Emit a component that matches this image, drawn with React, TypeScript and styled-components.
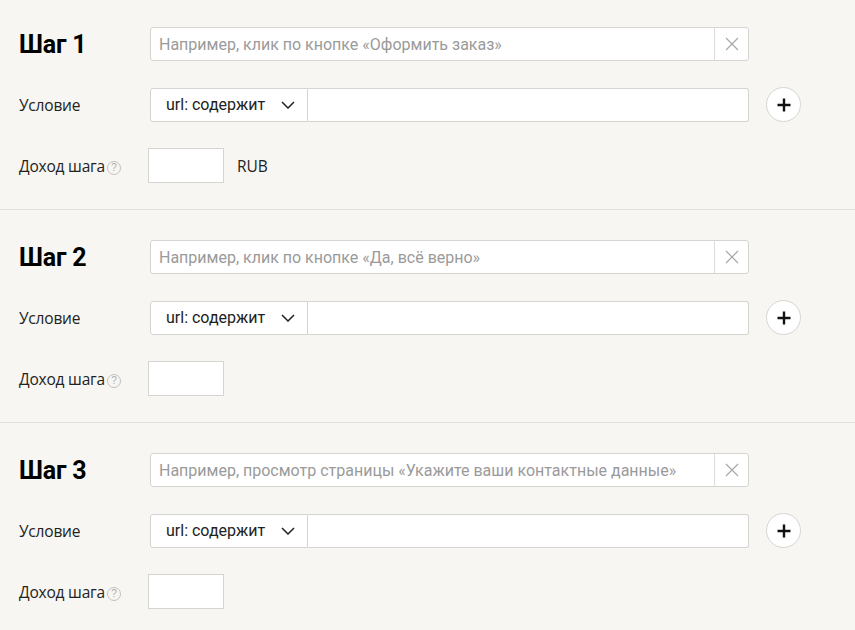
import React from "react";
import styled, { createGlobalStyle } from "styled-components";

const Global = createGlobalStyle`
  html, body { margin: 0; padding: 0; background: #f7f6f2; }
  body { font-family: "Open Sans", "Noto Sans", Arial, sans-serif; color: #222; }
`;

const Page = styled.div`
  width: 855px;
  background: #f7f6f2;
`;

const Section = styled.section<{ $first?: boolean }>`
  padding: ${(p) => (p.$first ? "27px" : "30px")} 0 26px 19px;
  border-bottom: 1px solid #e2e0dc;
  display: flex;
  flex-direction: column;
`;

const Row = styled.div<{ $gap?: number; $labelWidth?: number }>`
  display: grid;
  grid-template-columns: ${(p) => p.$labelWidth ?? 131}px auto;
  align-items: center;
  margin-top: ${(p) => p.$gap ?? 0}px;
`;

const Title = styled.div`
  font-family: Roboto, "Noto Sans", sans-serif;
  font-weight: 700;
  font-size: 25px;
  line-height: 30px;
  letter-spacing: -0.2px;
  color: #000;
  padding-top: 2px;
`;

const Label = styled.div`
  font-family: "Open Sans", "Noto Sans", sans-serif;
  font-size: 15.5px;
  letter-spacing: -0.2px;
  color: #222;
  display: flex;
  align-items: center;
  gap: 2px;
`;

const Field = styled.div`
  display: flex;
  align-items: center;
`;

const NameBox = styled.div`
  width: 599px;
  height: 34px;
  box-sizing: border-box;
  border: 1px solid #d6d4d0;
  border-radius: 3px;
  background: #fff;
  display: flex;
`;

const Placeholder = styled.div`
  flex: 1;
  padding-left: 8px;
  display: flex;
  align-items: center;
  font-family: Roboto, "Noto Sans", sans-serif;
  font-size: 16px;
  color: #9a9a9a;
  white-space: nowrap;
  overflow: hidden;
`;

const ClearBtn = styled.div`
  width: 33px;
  border-left: 1px solid #dedcd8;
  display: flex;
  align-items: center;
  justify-content: center;
`;

const Select = styled.div`
  width: 158px;
  height: 34px;
  box-sizing: border-box;
  border: 1px solid #d6d4d0;
  border-radius: 3px 0 0 3px;
  background: #fff;
  display: flex;
  align-items: center;
  justify-content: space-between;
  padding: 0 12px 0 15px;
  font-family: Roboto, "Noto Sans", sans-serif;
  font-size: 16px;
  color: #222;
`;

const ValueInput = styled.div`
  width: 441px;
  height: 34px;
  box-sizing: border-box;
  border: 1px solid #d6d4d0;
  border-left: none;
  border-radius: 0 3px 3px 0;
  background: #fff;
`;

const PlusBtn = styled.div`
  width: 35px;
  height: 35px;
  box-sizing: border-box;
  margin-left: 17px;
  border: 1px solid #d8d6d2;
  border-radius: 50%;
  background: #fff;
  display: flex;
  align-items: center;
  justify-content: center;
`;

const MoneyInput = styled.div`
  width: 76px;
  height: 35px;
  box-sizing: border-box;
  border: 1px solid #d6d4d0;
  background: #fff;
`;

const Currency = styled.span`
  margin-left: 13px;
  font-family: "Open Sans", "Noto Sans", sans-serif;
  font-size: 15.5px;
  color: #222;
`;

const Help = styled.span`
  width: 14px;
  height: 14px;
  box-sizing: border-box;
  border: 1px solid #c4c2be;
  border-radius: 50%;
  display: inline-flex;
  align-items: center;
  justify-content: center;
  font-family: Arial, sans-serif;
  font-size: 10px;
  color: #b0aeaa;
  margin-top: 4px;
`;

const Cross = () => (
  <svg width="14" height="14" viewBox="0 0 14 14">
    <path d="M1 1L13 13M13 1L1 13" stroke="#a8a8a8" strokeWidth="1.2" fill="none" />
  </svg>
);

const Chevron = () => (
  <svg width="14" height="8" viewBox="0 0 14 8">
    <path d="M1 1L7 7L13 1" stroke="#222" strokeWidth="1.5" fill="none" />
  </svg>
);

const Plus = () => (
  <svg width="14" height="14" viewBox="0 0 14 14">
    <path d="M7 0.5V13.5M0.5 7H13.5" stroke="#111" strokeWidth="2.4" fill="none" />
  </svg>
);

const steps = [
  { n: 1, ph: "Например, клик по кнопке «Оформить заказ»", rub: true },
  { n: 2, ph: "Например, клик по кнопке «Да, всё верно»", rub: false },
  { n: 3, ph: "Например, просмотр страницы «Укажите ваши контактные данные»", rub: false },
];

export default function App() {
  return (
    <Page>
      <Global />
      {steps.map((s, i) => (
        <Section key={s.n} $first={i === 0}>
          <Row>
            <Title>Шаг {s.n}</Title>
            <NameBox>
              <Placeholder>{s.ph}</Placeholder>
              <ClearBtn>
                <Cross />
              </ClearBtn>
            </NameBox>
          </Row>
          <Row $gap={26}>
            <Label>Условие</Label>
            <Field>
              <Select>
                url: содержит
                <Chevron />
              </Select>
              <ValueInput />
              <PlusBtn>
                <Plus />
              </PlusBtn>
            </Field>
          </Row>
          <Row $gap={26} $labelWidth={129}>
            <Label>
              Доход шага<Help>?</Help>
            </Label>
            <Field>
              <MoneyInput />
              {s.rub && <Currency>RUB</Currency>}
            </Field>
          </Row>
        </Section>
      ))}
    </Page>
  );
}
